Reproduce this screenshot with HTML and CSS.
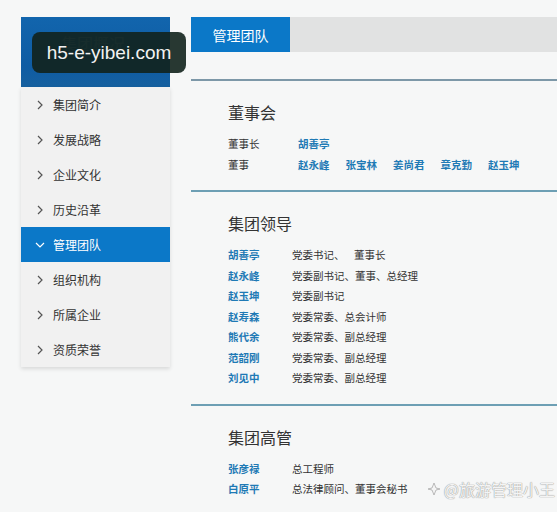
FILE: index.html
```html
<!DOCTYPE html>
<html lang="zh-CN">

<head>
    <meta charset="UTF-8">
    <meta name="viewport" content="width=device-width, initial-scale=1.0">
    <title>管理团队</title>
    <link rel="stylesheet" href="styles.css">
</head>

<body>
    <div class="page">
        <div class="sidebar">
            <div class="side-head">集团概况</div>
            <ul class="side-menu">
                <li class="side-item"><span class="arrow"><svg width="6" height="10" viewBox="0 0 6 10"><polyline points="1,1 5,5 1,9" /></svg></span>集团简介</li>
                <li class="side-item"><span class="arrow"><svg width="6" height="10" viewBox="0 0 6 10"><polyline points="1,1 5,5 1,9" /></svg></span>发展战略</li>
                <li class="side-item"><span class="arrow"><svg width="6" height="10" viewBox="0 0 6 10"><polyline points="1,1 5,5 1,9" /></svg></span>企业文化</li>
                <li class="side-item"><span class="arrow"><svg width="6" height="10" viewBox="0 0 6 10"><polyline points="1,1 5,5 1,9" /></svg></span>历史沿革</li>
                <li class="side-item active"><span class="arrow"><svg width="10" height="6" viewBox="0 0 10 6"><polyline points="1,1 5,5 9,1" /></svg></span>管理团队</li>
                <li class="side-item"><span class="arrow"><svg width="6" height="10" viewBox="0 0 6 10"><polyline points="1,1 5,5 1,9" /></svg></span>组织机构</li>
                <li class="side-item"><span class="arrow"><svg width="6" height="10" viewBox="0 0 6 10"><polyline points="1,1 5,5 1,9" /></svg></span>所属企业</li>
                <li class="side-item"><span class="arrow"><svg width="6" height="10" viewBox="0 0 6 10"><polyline points="1,1 5,5 1,9" /></svg></span>资质荣誉</li>
            </ul>
        </div>

        <div class="main">
            <div class="tab-bar">
                <div class="tab">管理团队</div>
            </div>

            <div class="section">
                <h2 class="section-title">董事会</h2>
                <div class="row">
                    <span class="label wide">董事长</span>
                    <span class="name">胡善亭</span>
                </div>
                <div class="row">
                    <span class="label wide">董事</span>
                    <span class="name gap">赵永峰</span>
                    <span class="name gap">张宝林</span>
                    <span class="name gap">姜尚君</span>
                    <span class="name gap">章克勤</span>
                    <span class="name gap">赵玉坤</span>
                </div>
            </div>

            <div class="section">
                <h2 class="section-title">集团领导</h2>
                <div class="row"><span class="name col">胡善亭</span><span class="role">党委书记、&nbsp;&nbsp;&nbsp;&nbsp;董事长</span></div>
                <div class="row"><span class="name col">赵永峰</span><span class="role">党委副书记、董事、总经理</span></div>
                <div class="row"><span class="name col">赵玉坤</span><span class="role">党委副书记</span></div>
                <div class="row"><span class="name col">赵寿森</span><span class="role">党委常委、总会计师</span></div>
                <div class="row"><span class="name col">熊代余</span><span class="role">党委常委、副总经理</span></div>
                <div class="row"><span class="name col">范韶刚</span><span class="role">党委常委、副总经理</span></div>
                <div class="row"><span class="name col">刘见中</span><span class="role">党委常委、副总经理</span></div>
            </div>

            <div class="section">
                <h2 class="section-title">集团高管</h2>
                <div class="row"><span class="name col">张彦禄</span><span class="role">总工程师</span></div>
                <div class="row"><span class="name col">白原平</span><span class="role">总法律顾问、董事会秘书</span></div>
            </div>
        </div>
    </div>

    <div class="site-badge">h5-e-yibei.com</div>
    <div class="watermark">
        <svg width="14" height="14" viewBox="0 0 14 14"><path d="M7 1 L9 6 L13 7 L9 8 L7 13 L5 8 L1 7 L5 6 Z" /></svg>
        @旅游管理小王
    </div>
</body>

</html>
```

FILE: styles.css
```css
* {
    margin: 0;
    padding: 0;
    box-sizing: border-box;
}

body {
    font-family: "Noto Sans CJK SC", "Noto Sans", sans-serif;
    background: #f6f7f7;
    color: #333;
    overflow: hidden;
    height: 512px;
    position: relative;
}

.page {
    display: flex;
    padding-top: 17px;
}

/* 左侧菜单 */
.sidebar {
    width: 149px;
    margin-left: 21px;
    flex-shrink: 0;
}

.side-head {
    height: 70px;
    background: linear-gradient(#1265ad, #0f5ca3 70%, #16609f);
    color: rgba(255, 255, 255, 0.25);
    font-size: 16px;
    padding: 14px 0 0 40px;
}

.side-menu {
    list-style: none;
    background: #f1f1f1;
    box-shadow: 0 2px 4px rgba(0, 0, 0, 0.12);
}

.side-item {
    height: 35px;
    display: flex;
    align-items: center;
    font-size: 12px;
    color: #333;
}

.side-item .arrow {
    width: 32px;
    padding-left: 16px;
    display: flex;
    align-items: center;
}

.side-item svg polyline {
    fill: none;
    stroke: #555;
    stroke-width: 1.2;
}

.side-item.active {
    background: #0b78c8;
    color: #fff;
}

.side-item.active .arrow {
    padding-left: 14px;
}

.side-item.active svg polyline {
    stroke: #fff;
}

/* 右侧内容 */
.main {
    flex: 1;
    margin-left: 21px;
}

.tab-bar {
    height: 35px;
    background: #e1e2e2;
    display: flex;
}

.tab {
    width: 99px;
    background: #0b78c8;
    color: #fff;
    font-size: 14px;
    display: flex;
    align-items: center;
    justify-content: center;
}

.section {
    border-top: 2px solid #6d9fb4;
    padding: 19px 0 15px 37px;
}

.tab-bar + .section {
    margin-top: 27px;
    border-top-color: #7d98a8;
}

.section-title {
    font-size: 16px;
    font-weight: normal;
    line-height: 24px;
    color: #333;
    margin-bottom: 10px;
}

.row {
    display: flex;
    font-size: 10.5px;
    line-height: 20.5px;
}

.label.wide {
    width: 70px;
}

.name {
    color: #1f7ab5;
    font-weight: bold;
}

.name.gap {
    margin-right: 16px;
}

.name.col {
    width: 64px;
}

.role {
    color: #333;
    white-space: pre;
}

/* 覆盖层 */
.site-badge {
    position: absolute;
    left: 32px;
    top: 32px;
    width: 154px;
    height: 41px;
    border-radius: 8px;
    background: rgba(18, 34, 28, 0.9);
    color: #f2f2f2;
    font-family: "Liberation Sans", sans-serif;
    font-size: 19px;
    display: flex;
    align-items: center;
    justify-content: center;
}

.watermark {
    position: absolute;
    right: 2px;
    bottom: 11px;
    font-size: 16px;
    color: #f4f4f4;
    text-shadow: 0 0 1px #9a9a9a, 0 0 1px #9a9a9a;
    display: flex;
    align-items: center;
    gap: 3px;
}

.watermark svg path {
    fill: #f4f4f4;
    stroke: #aaa;
    stroke-width: 0.8;
}
```
